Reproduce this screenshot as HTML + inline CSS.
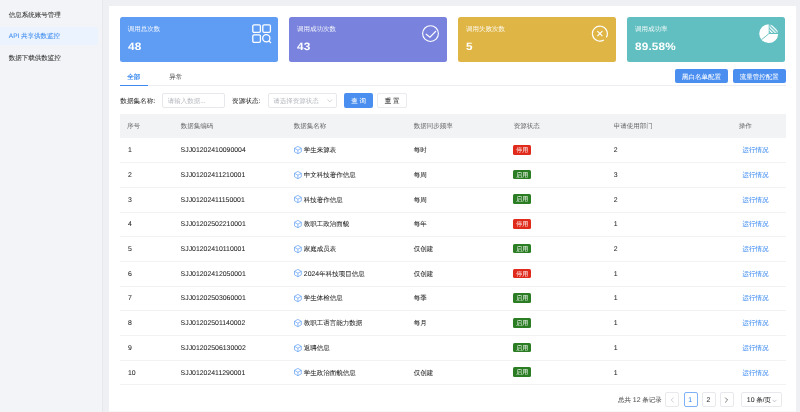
<!DOCTYPE html>
<html><head><meta charset="utf-8">
<style>
*{box-sizing:border-box;margin:0;padding:0}
html,body{width:800px;height:412px;overflow:hidden;background:#eff0f3;font-family:"Liberation Sans",sans-serif;color:#333;text-rendering:geometricPrecision}
.abs{position:absolute}
svg{display:block}
#side{left:0;top:0;width:103px;height:412px;background:#f3f4f7;border-right:1px solid #e7e8ec}
.mi{position:absolute;left:8.8px;font-size:6.5px;line-height:8px;color:#333;font-weight:500;-webkit-text-stroke:.06px currentColor;white-space:nowrap}
#act{left:0;top:27px;width:97.7px;height:17.5px;background:#eaf3fe;border-radius:0 3px 3px 0}
#card{left:109px;top:6px;width:687px;height:405px;background:#fff}
.stat{position:absolute;top:17px;height:44.5px;width:158.2px;border-radius:2.5px;color:#fff}
.stat .t{position:absolute;left:7.8px;top:8.6px;font-size:6.5px;line-height:8px;white-space:nowrap;color:rgba(255,255,255,.92)}
.stat .n{position:absolute;left:7.7px;top:22.8px;font-size:10.7px;letter-spacing:.15px;transform:scaleX(1.1);transform-origin:0 0;line-height:14px;font-weight:bold;white-space:nowrap}
.stat svg{position:absolute}
.tab{position:absolute;top:73.8px;font-weight:500;font-size:6.5px;line-height:8px;white-space:nowrap}
.lbl{position:absolute;top:97.5px;letter-spacing:.2px;font-size:6.5px;line-height:8px;color:#333;font-weight:500;-webkit-text-stroke:.05px currentColor;white-space:nowrap}
.inp{position:absolute;top:93.3px;height:14.3px;border:1px solid #e7e8eb;border-radius:2px;background:#fff}
.ph{position:absolute;top:97.6px;font-size:6.5px;line-height:8px;color:#b4b7bd;white-space:nowrap}
.btn{position:absolute;border-radius:2px;font-size:6.5px;line-height:8px;white-space:nowrap;text-align:center;font-weight:500;-webkit-text-stroke:.04px currentColor}
.th{position:absolute;top:123px;font-size:6.5px;line-height:8px;color:#666;font-weight:500;white-space:nowrap}
.rl{position:absolute;left:120px;width:665.5px;height:1px;background:#f1f2f4}
.td{position:absolute;font-size:6.5px;line-height:8px;color:#262626;font-weight:500;white-space:nowrap;-webkit-text-stroke:.05px currentColor}
.l{font-size:6.9px;font-weight:400}
.on{background:#2b7d24}.off{background:#e02b1c}
.tag{position:absolute;width:18.1px;height:9.6px;border-radius:1.5px;color:#fff;font-size:6px;line-height:12.4px;font-weight:500;text-align:center}
.link{color:#3d8bf0}
.pg{position:absolute;top:392px;height:15px;border:1px solid #e7e9ed;border-radius:2px;background:#fff;font-size:6.5px;line-height:12.6px;text-align:center;color:#333}
</style></head><body>
<div id="root" style="position:absolute;left:0;top:0;width:800px;height:412px;will-change:transform">
<div id="side" class="abs"></div>
<div id="act" class="abs"></div>
<div class="mi" style="top:12px">信息系统账号管理</div>
<div class="mi" style="top:33.4px;color:#3d8bf0">API 共享供数监控</div>
<div class="mi" style="top:54.9px">数据下载供数监控</div>

<div id="card" class="abs"></div>
<div class="abs" style="left:109px;top:411px;width:687px;height:1px;background:#f6f7f9"></div>

<!-- stat cards -->
<div class="stat" style="left:120px;background:#5f9df5">
  <div class="t">调用总次数</div><div class="n">48</div>
  <svg style="left:132px;top:7px" width="20" height="20" viewBox="0 0 20 20" fill="none" stroke="#fff" stroke-width="1.3">
    <rect x="0.8" y="0.8" width="7.6" height="7.6" rx="1.3"/>
    <rect x="10.8" y="0.8" width="7.6" height="7.6" rx="1.3"/>
    <rect x="0.8" y="10.8" width="7.6" height="7.6" rx="1.3"/>
    <circle cx="14.3" cy="14.3" r="3.6"/>
    <path d="M16.9 16.9 L19 19"/>
  </svg>
</div>
<div class="stat" style="left:289.1px;background:#7983dd">
  <div class="t">调用成功次数</div><div class="n">43</div>
  <svg style="left:132.5px;top:7.5px" width="18" height="18" viewBox="0 0 18 18" fill="none" stroke="#fff" stroke-width="1.1">
    <circle cx="8.5" cy="8.6" r="7.9"/>
    <path d="M3.8 9 L8 12.2 L14 6"/>
  </svg>
</div>
<div class="stat" style="left:458.2px;background:#dfb545">
  <div class="t">调用失败次数</div><div class="n">5</div>
  <svg style="left:132.8px;top:8px" width="18" height="18" viewBox="0 0 18 18" fill="none" stroke="#fff" stroke-width="1.2">
    <path d="M12.85 14.92 A7.45 7.45 0 1 1 15.35 12.33"/>
    <path d="M6.4 6.1 L11.4 11.1 M11.4 6.1 L6.4 11.1"/>
  </svg>
</div>
<div class="stat" style="left:627.3px;background:#62bfc1">
  <div class="t">调用成功率</div><div class="n">89.58%</div>
  <svg style="left:132px;top:7px" width="20" height="20" viewBox="0 0 20 20">
    <defs><pattern id="hp" width="2.4" height="2.4" patternUnits="userSpaceOnUse" patternTransform="rotate(-45)"><rect width="1.2" height="2.4" fill="#fff"/></pattern>
    <clipPath id="hc"><rect x="10.4" y="0" width="10" height="9.1"/></clipPath></defs>
    <path d="M9.7 9.9 L9.7 0.2 A9.45 9.45 0 1 0 19.15 9.9 Z" fill="#fff"/>
    <circle cx="9.9" cy="9.65" r="9.2" fill="url(#hp)" clip-path="url(#hc)"/>
    <path d="M2.6 15.6 L9.7 9.9" stroke="#62bfc1" stroke-width=".9"/>
  </svg>
</div>

<!-- tabs -->
<div class="tab" style="left:127.2px;color:#3d8bf0;font-weight:700">全部</div>
<div class="tab" style="left:169.2px;color:#4a4a4a;font-weight:500">异常</div>
<div class="abs" style="left:120px;top:85.2px;width:665.5px;height:0.7px;background:#eceef2"></div>
<div class="abs" style="left:119.8px;top:84.8px;width:28px;height:1.3px;background:#3d8bf0"></div>

<div class="btn" style="left:675.2px;top:69.1px;width:52.7px;height:14.2px;background:#4a8ff0;color:#fff;line-height:17.2px">黑白名单配置</div>
<div class="btn" style="left:732.6px;top:69.1px;width:53.1px;height:14.2px;background:#4a8ff0;color:#fff;line-height:17.2px">流量管控配置</div>

<!-- filter -->
<div class="lbl" style="left:120.2px">数据集名称:</div>
<div class="inp" style="left:162.2px;width:62.5px"></div>
<div class="ph" style="left:167.7px">请输入数据...</div>
<div class="lbl" style="left:232px">资源状态:</div>
<div class="inp" style="left:268px;width:68.7px"></div>
<div class="ph" style="left:273.2px">请选择资源状态</div>
<svg class="abs" style="left:326.5px;top:99px" width="6" height="4" viewBox="0 0 6 4" fill="none" stroke="#bcbfc5" stroke-width=".65"><path d="M.5 .4 L2.8 2.9 L5.1 .4"/></svg>
<div class="btn" style="left:344.2px;top:93.3px;width:28.8px;height:14.3px;background:#4a8ff0;color:#fff;line-height:17.3px">查 询</div>
<div class="btn" style="left:377.4px;top:93.3px;width:29.3px;height:14.3px;background:#fff;border:1px solid #e9ebee;color:#333;line-height:15.8px">重 置</div>

<!-- table header -->
<div class="abs" style="left:120px;top:114px;width:665.5px;height:24px;background:#f2f3f5"></div>
<div class="th" style="left:127px">序号</div>
<div class="th" style="left:180.8px">数据集编码</div>
<div class="th" style="left:293.8px">数据集名称</div>
<div class="th" style="left:413.8px">数据同步频率</div>
<div class="th" style="left:513.8px">资源状态</div>
<div class="th" style="left:613.8px">申请使用部门</div>
<div class="th" style="left:738.8px">操作</div>


<!-- pagination -->
<div class="td" style="left:618px;top:396.6px;color:#555;font-weight:400">总共 <span class="l">12</span> 条记录</div>
<div class="pg" style="left:665.2px;width:14px"></div>
<svg class="abs" style="left:670px;top:396.5px" width="5" height="6" viewBox="0 0 5 6" fill="none" stroke="#c0c4cc" stroke-width=".8"><path d="M3.6 .6 L1.2 3 L3.6 5.4"/></svg>
<div class="pg" style="left:683.5px;width:14.2px;border-color:#7fb1f6"></div>
<div class="td" style="left:683px;top:396.6px;width:14.5px;text-align:center;color:#3d8bf0"><span class="l">1</span></div>
<div class="pg" style="left:701.5px;width:14px"></div>
<div class="td" style="left:701.5px;top:396.6px;width:14px;text-align:center;color:#333"><span class="l">2</span></div>
<div class="pg" style="left:719.5px;width:14.2px"></div>
<svg class="abs" style="left:724px;top:396.5px" width="5" height="6" viewBox="0 0 5 6" fill="none" stroke="#555" stroke-width=".8"><path d="M1.2 .6 L3.6 3 L1.2 5.4"/></svg>
<div class="pg" style="left:741.2px;width:40.5px"></div>
<div class="td" style="left:746.8px;top:396.6px;color:#333;font-weight:400"><span class="l">10</span> 条/页</div>
<svg class="abs" style="left:771.8px;top:398.5px" width="5" height="4" viewBox="0 0 5 4" fill="none" stroke="#a8abb2" stroke-width=".7"><path d="M.5 .8 L2.5 2.8 L4.5 .8"/></svg>
<div class="rl" style="top:162px"></div>
<div class="td" style="left:128px;top:147.25px"><span class="l">1</span></div>
<div class="td" style="left:180.6px;top:147.25px"><span class="l">SJJ01202410090004</span></div>
<div class="abs" style="left:293.6px;top:145.95px"><svg width="9" height="9" viewBox="0 0 9 9" fill="none" stroke="#5a9cf4" stroke-width=".7" stroke-linejoin="round"><path d="M3.9 .4 L7.3 2.3 L7.3 5.8 L3.9 7.7 L.5 5.8 L.5 2.3 Z M.5 2.3 L3.9 4.2 L7.3 2.3 M3.9 4.2 L3.9 7.7"/></svg></div>
<div class="td" style="left:303.8px;top:147.25px">学生来源表</div>
<div class="td" style="left:413.8px;top:147.25px">每时</div>
<div class="tag off" style="left:513.3px;top:145.05px">停用</div>
<div class="td" style="left:613.8px;top:147.25px"><span class="l">2</span></div>
<div class="td link" style="left:742.5px;top:147.25px">运行情况</div>
<div class="rl" style="top:187px"></div>
<div class="td" style="left:128px;top:171.95px"><span class="l">2</span></div>
<div class="td" style="left:180.6px;top:171.95px"><span class="l">SJJ01202411210001</span></div>
<div class="abs" style="left:293.6px;top:170.65px"><svg width="9" height="9" viewBox="0 0 9 9" fill="none" stroke="#5a9cf4" stroke-width=".7" stroke-linejoin="round"><path d="M3.9 .4 L7.3 2.3 L7.3 5.8 L3.9 7.7 L.5 5.8 L.5 2.3 Z M.5 2.3 L3.9 4.2 L7.3 2.3 M3.9 4.2 L3.9 7.7"/></svg></div>
<div class="td" style="left:303.8px;top:171.95px">中文科技著作信息</div>
<div class="td" style="left:413.8px;top:171.95px">每周</div>
<div class="tag on" style="left:513.3px;top:169.75px">启用</div>
<div class="td" style="left:613.8px;top:171.95px"><span class="l">3</span></div>
<div class="td link" style="left:742.5px;top:171.95px">运行情况</div>
<div class="rl" style="top:212px"></div>
<div class="td" style="left:128px;top:196.65px"><span class="l">3</span></div>
<div class="td" style="left:180.6px;top:196.65px"><span class="l">SJJ01202411150001</span></div>
<div class="abs" style="left:293.6px;top:195.35px"><svg width="9" height="9" viewBox="0 0 9 9" fill="none" stroke="#5a9cf4" stroke-width=".7" stroke-linejoin="round"><path d="M3.9 .4 L7.3 2.3 L7.3 5.8 L3.9 7.7 L.5 5.8 L.5 2.3 Z M.5 2.3 L3.9 4.2 L7.3 2.3 M3.9 4.2 L3.9 7.7"/></svg></div>
<div class="td" style="left:303.8px;top:196.65px">科技著作信息</div>
<div class="td" style="left:413.8px;top:196.65px">每周</div>
<div class="tag on" style="left:513.3px;top:194.45px">启用</div>
<div class="td" style="left:613.8px;top:196.65px"><span class="l">2</span></div>
<div class="td link" style="left:742.5px;top:196.65px">运行情况</div>
<div class="rl" style="top:236px"></div>
<div class="td" style="left:128px;top:221.35px"><span class="l">4</span></div>
<div class="td" style="left:180.6px;top:221.35px"><span class="l">SJJ01202502210001</span></div>
<div class="abs" style="left:293.6px;top:220.05px"><svg width="9" height="9" viewBox="0 0 9 9" fill="none" stroke="#5a9cf4" stroke-width=".7" stroke-linejoin="round"><path d="M3.9 .4 L7.3 2.3 L7.3 5.8 L3.9 7.7 L.5 5.8 L.5 2.3 Z M.5 2.3 L3.9 4.2 L7.3 2.3 M3.9 4.2 L3.9 7.7"/></svg></div>
<div class="td" style="left:303.8px;top:221.35px">教职工政治面貌</div>
<div class="td" style="left:413.8px;top:221.35px">每年</div>
<div class="tag off" style="left:513.3px;top:219.15px">停用</div>
<div class="td" style="left:613.8px;top:221.35px"><span class="l">1</span></div>
<div class="td link" style="left:742.5px;top:221.35px">运行情况</div>
<div class="rl" style="top:261px"></div>
<div class="td" style="left:128px;top:246.05px"><span class="l">5</span></div>
<div class="td" style="left:180.6px;top:246.05px"><span class="l">SJJ01202410110001</span></div>
<div class="abs" style="left:293.6px;top:244.75px"><svg width="9" height="9" viewBox="0 0 9 9" fill="none" stroke="#5a9cf4" stroke-width=".7" stroke-linejoin="round"><path d="M3.9 .4 L7.3 2.3 L7.3 5.8 L3.9 7.7 L.5 5.8 L.5 2.3 Z M.5 2.3 L3.9 4.2 L7.3 2.3 M3.9 4.2 L3.9 7.7"/></svg></div>
<div class="td" style="left:303.8px;top:246.05px">家庭成员表</div>
<div class="td" style="left:413.8px;top:246.05px">仅创建</div>
<div class="tag on" style="left:513.3px;top:243.85px">启用</div>
<div class="td" style="left:613.8px;top:246.05px"><span class="l">2</span></div>
<div class="td link" style="left:742.5px;top:246.05px">运行情况</div>
<div class="rl" style="top:286px"></div>
<div class="td" style="left:128px;top:270.75px"><span class="l">6</span></div>
<div class="td" style="left:180.6px;top:270.75px"><span class="l">SJJ01202412050001</span></div>
<div class="abs" style="left:293.6px;top:269.45px"><svg width="9" height="9" viewBox="0 0 9 9" fill="none" stroke="#5a9cf4" stroke-width=".7" stroke-linejoin="round"><path d="M3.9 .4 L7.3 2.3 L7.3 5.8 L3.9 7.7 L.5 5.8 L.5 2.3 Z M.5 2.3 L3.9 4.2 L7.3 2.3 M3.9 4.2 L3.9 7.7"/></svg></div>
<div class="td" style="left:303.8px;top:270.75px"><span class="l">2024</span>年科技项目信息</div>
<div class="td" style="left:413.8px;top:270.75px">仅创建</div>
<div class="tag off" style="left:513.3px;top:268.55px">停用</div>
<div class="td" style="left:613.8px;top:270.75px"><span class="l">1</span></div>
<div class="td link" style="left:742.5px;top:270.75px">运行情况</div>
<div class="rl" style="top:310px"></div>
<div class="td" style="left:128px;top:295.45px"><span class="l">7</span></div>
<div class="td" style="left:180.6px;top:295.45px"><span class="l">SJJ01202503060001</span></div>
<div class="abs" style="left:293.6px;top:294.15px"><svg width="9" height="9" viewBox="0 0 9 9" fill="none" stroke="#5a9cf4" stroke-width=".7" stroke-linejoin="round"><path d="M3.9 .4 L7.3 2.3 L7.3 5.8 L3.9 7.7 L.5 5.8 L.5 2.3 Z M.5 2.3 L3.9 4.2 L7.3 2.3 M3.9 4.2 L3.9 7.7"/></svg></div>
<div class="td" style="left:303.8px;top:295.45px">学生体检信息</div>
<div class="td" style="left:413.8px;top:295.45px">每季</div>
<div class="tag on" style="left:513.3px;top:293.25px">启用</div>
<div class="td" style="left:613.8px;top:295.45px"><span class="l">1</span></div>
<div class="td link" style="left:742.5px;top:295.45px">运行情况</div>
<div class="rl" style="top:335px"></div>
<div class="td" style="left:128px;top:320.15px"><span class="l">8</span></div>
<div class="td" style="left:180.6px;top:320.15px"><span class="l">SJJ01202501140002</span></div>
<div class="abs" style="left:293.6px;top:318.85px"><svg width="9" height="9" viewBox="0 0 9 9" fill="none" stroke="#5a9cf4" stroke-width=".7" stroke-linejoin="round"><path d="M3.9 .4 L7.3 2.3 L7.3 5.8 L3.9 7.7 L.5 5.8 L.5 2.3 Z M.5 2.3 L3.9 4.2 L7.3 2.3 M3.9 4.2 L3.9 7.7"/></svg></div>
<div class="td" style="left:303.8px;top:320.15px">教职工语言能力数据</div>
<div class="td" style="left:413.8px;top:320.15px">每月</div>
<div class="tag on" style="left:513.3px;top:317.95px">启用</div>
<div class="td" style="left:613.8px;top:320.15px"><span class="l">1</span></div>
<div class="td link" style="left:742.5px;top:320.15px">运行情况</div>
<div class="rl" style="top:360px"></div>
<div class="td" style="left:128px;top:344.85px"><span class="l">9</span></div>
<div class="td" style="left:180.6px;top:344.85px"><span class="l">SJJ01202506130002</span></div>
<div class="abs" style="left:293.6px;top:343.55px"><svg width="9" height="9" viewBox="0 0 9 9" fill="none" stroke="#5a9cf4" stroke-width=".7" stroke-linejoin="round"><path d="M3.9 .4 L7.3 2.3 L7.3 5.8 L3.9 7.7 L.5 5.8 L.5 2.3 Z M.5 2.3 L3.9 4.2 L7.3 2.3 M3.9 4.2 L3.9 7.7"/></svg></div>
<div class="td" style="left:303.8px;top:344.85px">返聘信息</div>
<div class="tag on" style="left:513.3px;top:342.65px">启用</div>
<div class="td" style="left:613.8px;top:344.85px"><span class="l">1</span></div>
<div class="td link" style="left:742.5px;top:344.85px">运行情况</div>
<div class="rl" style="top:384px"></div>
<div class="td" style="left:128px;top:369.55px"><span class="l">10</span></div>
<div class="td" style="left:180.6px;top:369.55px"><span class="l">SJJ01202411290001</span></div>
<div class="abs" style="left:293.6px;top:368.25px"><svg width="9" height="9" viewBox="0 0 9 9" fill="none" stroke="#5a9cf4" stroke-width=".7" stroke-linejoin="round"><path d="M3.9 .4 L7.3 2.3 L7.3 5.8 L3.9 7.7 L.5 5.8 L.5 2.3 Z M.5 2.3 L3.9 4.2 L7.3 2.3 M3.9 4.2 L3.9 7.7"/></svg></div>
<div class="td" style="left:303.8px;top:369.55px">学生政治面貌信息</div>
<div class="td" style="left:413.8px;top:369.55px">仅创建</div>
<div class="tag on" style="left:513.3px;top:367.35px">启用</div>
<div class="td" style="left:613.8px;top:369.55px"><span class="l">1</span></div>
<div class="td link" style="left:742.5px;top:369.55px">运行情况</div>
</div>
</body></html>
